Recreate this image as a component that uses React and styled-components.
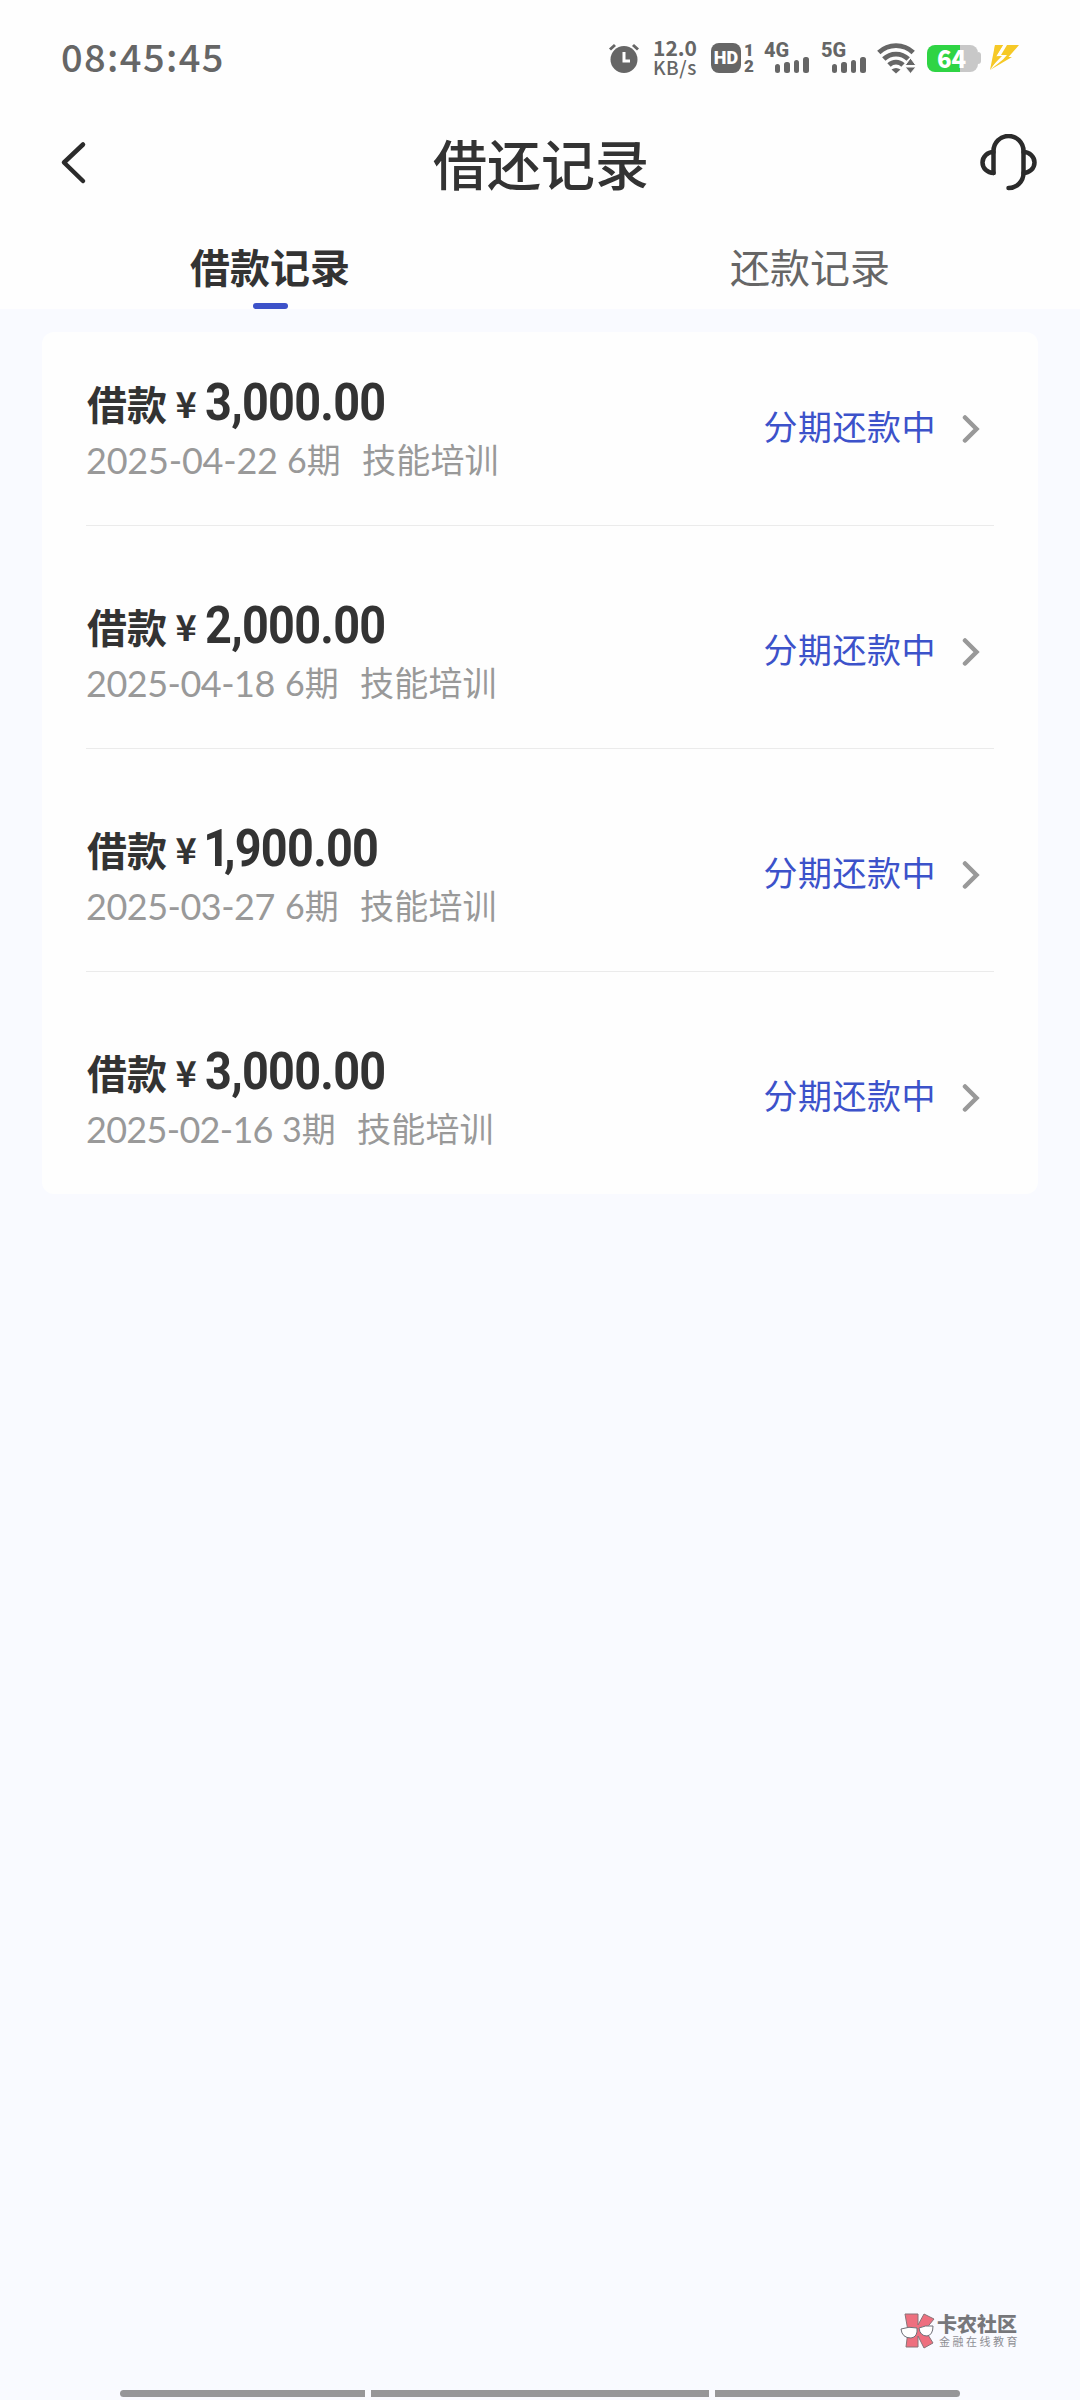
import React from "react";
import styled, { createGlobalStyle } from "styled-components";

const GlobalStyle = createGlobalStyle`
  * { box-sizing: border-box; }
  body { margin: 0; background: #f9faff; }
`;

const cjk = `"Noto Sans CJK SC", sans-serif`;

const Page = styled.div`
  width: 1080px;
  height: 2400px;
  display: flex;
  flex-direction: column;
  background: #f9faff;
  font-family: ${cjk};
  color: #333;
  overflow: hidden;
  white-space: nowrap;
`;

const Top = styled.header`
  height: 309px;
  background: #fefefe;
  display: flex;
  flex-direction: column;
`;

const StatusBar = styled.div`
  height: 116px;
  padding: 0 60px 0 61px;
  display: flex;
  align-items: center;
  justify-content: space-between;
  color: #666;
`;

const Clock = styled.div`
  font-size: 38px;
  font-weight: 500;
  line-height: 40px;
  letter-spacing: 1.4px;
  padding-bottom: 4px;
`;

const StatusIcons = styled.div`
  display: flex;
  align-items: center;
  height: 116px;
`;

const Glyph = styled.svg`
  display: block;
  flex: none;
  margin-left: ${(p) => p.$gap || 0}px;
`;

const Speed = styled.div`
  width: 46px;
  margin-left: 12px;
  display: flex;
  flex-direction: column;
  align-items: center;
  font-weight: 700;
  font-size: 21px;
  line-height: 19px;
  padding-bottom: 2px;
`;

const SpeedUnit = styled.span`
  font-size: 19px;
  font-weight: 500;
  letter-spacing: 0.6px;
`;

const HdBadge = styled.div`
  width: 30px;
  height: 30px;
  margin-left: 13px;
  border-radius: 8px;
  background: #666;
  color: #fff;
  font: 900 18px/30px Roboto, sans-serif;
  text-align: center;
`;

const Sims = styled.div`
  width: 12px;
  margin-left: 2px;
  display: flex;
  flex-direction: column;
  align-items: center;
  font: 900 17px/16px Roboto, sans-serif;
`;

const Network = styled.div`
  width: 45px;
  height: 32px;
  margin-left: ${(p) => p.$gap}px;
  display: flex;
  flex-direction: column;
  font: 800 20px/16px Roboto, sans-serif;
`;

const Bars = styled.div`
  display: flex;
  align-items: flex-end;
  justify-content: flex-end;
  gap: 4px;
  height: 17px;
  margin-top: -2px;
`;

const Bar = styled.i`
  width: 5.6px;
  height: ${(p) => p.$h}px;
  border-radius: 2.5px;
  background: #666;
`;

const Battery = styled.div`
  width: 51px;
  height: 27px;
  margin-left: 11px;
  padding-right: 2px;
  border-radius: 8px;
  background: linear-gradient(90deg, #2fd444 0 64.5%, #c8c8c8 64.5%);
  color: #fff;
  font: 900 24px/26px "Noto Sans CJK SC", sans-serif;
  text-align: center;
`;

const BatteryTip = styled.i`
  width: 3px;
  height: 12px;
  border-radius: 0 3px 3px 0;
  background: #c8c8c8;
`;

const NavBar = styled.div`
  height: 94px;
  padding: 0 43px 0 60px;
  display: grid;
  grid-template-columns: 60px 1fr 60px;
  align-items: center;
`;

const NavSlot = styled.div`
  display: flex;
  justify-content: ${(p) => p.$align};
`;

const Title = styled.h1`
  margin: 0;
  padding-right: 15px;
  font-size: 54px;
  line-height: 60px;
  font-weight: 500;
  text-align: center;
`;

const Tabs = styled.nav`
  height: 99px;
  display: grid;
  grid-template-columns: 1fr 1fr;
`;

const Tab = styled.div`
  display: flex;
  flex-direction: column;
  align-items: center;
  justify-content: space-between;
  padding-top: 31px;
  font-size: 40px;
  line-height: 50px;
  font-weight: ${(p) => (p.$active ? 700 : 400)};
  color: ${(p) => (p.$active ? "#333" : "#666")};
`;

const Underline = styled.i`
  width: 35px;
  height: 6px;
  border-radius: 3px;
  background: #3d52c9;
`;

const Card = styled.main`
  width: 996px;
  height: 862px;
  margin: 23px 42px 0;
  padding: 0 44px;
  border-radius: 12px;
  background: #fefefe;
`;

const Row = styled.section`
  height: ${(p) => (p.$first ? 194 : 223)}px;
  padding-bottom: ${(p) => (p.$last ? 0 : 39)}px;
  padding-top: ${(p) => (p.$first ? 42 : 71)}px;
  border-bottom: ${(p) => (p.$last ? "0" : "1px solid #ebebeb")};
  display: flex;
  justify-content: space-between;
`;

const Info = styled.div`
  display: flex;
  flex-direction: column;
`;

const AmountLine = styled.div`
  height: 61px;
  display: flex;
  align-items: baseline;
  font-weight: 700;
`;

const Label = styled.span`
  font-size: 40px;
  line-height: 58px;
  margin-left: 1px;
`;

const Yen = styled.span`
  width: 38px;
  text-align: center;
  font: 700 36px/50px "Noto Sans CJK SC", sans-serif;
  position: relative;
  top: -2px;
`;

const Amount = styled.span`
  font: 700 52px/50px Roboto, sans-serif;
  transform: scaleX(0.9);
  transform-origin: left;
  letter-spacing: -0.8px;
`;

const Slim = styled.span`
  margin-left: -2px;
  margin-right: -6px;
`;

const Detail = styled.div`
  display: flex;
  height: 50px;
  font: 400 34px/50px Lato, ${cjk};
  color: #999;
`;

const DateText = styled.span`
  width: ${(p) => p.$w}px;
  font-size: 36px;
  letter-spacing: ${(p) => p.$tracking}px;
`;

const Term = styled.span`
  width: 75px;
`;

const Kind = styled.span`
  letter-spacing: 0.2px;
`;

const Status = styled.div`
  height: 50px;
  margin-top: 27px;
  padding-right: 14px;
  display: flex;
  align-items: center;
  gap: 26px;
  font-size: 34px;
  line-height: 50px;
  letter-spacing: 0.5px;
  color: #3c52ca;
`;

const Chevron = styled.svg`
  margin-top: 5px;
`;

const Spacer = styled.div`
  flex: 1;
`;

const Watermark = styled.div`
  align-self: flex-end;
  width: 180px;
  height: 38px;
  margin-bottom: 39px;
  display: flex;
  gap: 2px;
`;

const Brand = styled.div`
  display: flex;
  flex-direction: column;
  color: #77777b;
  font-size: 20px;
  line-height: 22px;
  font-weight: 900;
`;

const Slogan = styled.span`
  margin-left: 2px;
  font-size: 11px;
  line-height: 13px;
  font-weight: 400;
  letter-spacing: 2.5px;
  color: #8e8e94;
`;

const HomeBar = styled.div`
  display: flex;
  justify-content: center;
  gap: 6px;
  height: 10px;
`;

const HomeSegment = styled.i`
  width: ${(p) => p.$w}px;
  height: 7px;
  background: #969698;
  border-radius: ${(p) => p.$r || 0};
`;

const records = [
  { amount: "3,000.00", date: "2025-04-22", term: "6期", w: 201, tracking: -0.2 },
  { amount: "2,000.00", date: "2025-04-18", term: "6期", w: 199, tracking: -0.5 },
  { amount: "1,900.00", date: "2025-03-27", term: "6期", w: 199, tracking: -0.5 },
  { amount: "3,000.00", date: "2025-02-16", term: "3期", w: 196, tracking: -0.7 },
];

function Signal({ label, gap }) {
  return (
    <Network $gap={gap}>
      <span>{label}</span>
      <Bars>
        {[9, 11, 13, 16].map((h) => (
          <Bar key={h} $h={h} />
        ))}
      </Bars>
    </Network>
  );
}

function Alarm() {
  return (
    <Glyph width="32" height="32" viewBox="0 0 32 32">
      <circle cx="16" cy="17.5" r="13.5" fill="#666" />
      <path d="M2 7.5 7 3M30 7.5 25 3" stroke="#666" strokeWidth="3" />
      <path d="M16 10v9h6" fill="none" stroke="#fff" strokeWidth="3" />
    </Glyph>
  );
}

function Wifi() {
  return (
    <Glyph $gap={11} width="39" height="32" viewBox="0 0 39 32">
      <g fill="none" stroke="#666" strokeWidth="4.8">
        <path d="M1.8 10.5a25 25 0 0 1 34.4 0" />
        <path d="M6.8 17a17.5 17.5 0 0 1 24.4 0" />
        <path d="M12 23a10 10 0 0 1 14 0" />
      </g>
      <path d="M14.5 27.500q4.500-3 9 0L19 31.500z" fill="#666" />
      <path d="M28 23.500 33.500 16l5.500 7.500zM28 25h11l-5.500 6.500z" fill="#666" stroke="#fefefe" strokeWidth="1" />
    </Glyph>
  );
}

function Bolt() {
  return (
    <Glyph $gap={8} width="31" height="28" viewBox="0 0 31 28">
      <path d="M6 1h8L7 12.500l6-.5-9 9z" fill="#f6c927" />
      <path d="M18 1h12L19.500 13h3.500L1 26l13-10.500 4-4.500h-6z" fill="#f6c927" />
      <path d="M6 1 1 26l5-7 6-7-5 .5L14 1z" fill="#f6c927" />
    </Glyph>
  );
}

function Logo() {
  return (
    <svg width="35" height="36" viewBox="0 0 35 36">
      <path
        d="M5 1h13v11L24 1l10 5-9 11 8 13-9 5-6-12v11H6l2-16z"
        fill="#ee6f7f"
        stroke="#8a7378"
        strokeWidth="1"
      />
      <path d="M1 16q8-3 16-1 1 9-6 10-9 0-10-9zM19 15q6-3 14-2 0 9-6 10-7 0-8-8z" fill="#fff" stroke="#707078" strokeWidth="1" />
    </svg>
  );
}

function AmountText({ value }) {
  if (value[0] === "1") {
    return (
      <Amount>
        <Slim>1</Slim>
        {value.slice(1)}
      </Amount>
    );
  }
  return <Amount>{value}</Amount>;
}

export default function App() {
  return (
    <Page>
      <GlobalStyle />
      <Top>
        <StatusBar>
          <Clock>08:45:45</Clock>
          <StatusIcons>
            <Alarm />
            <Speed>
              <span>12.0</span>
              <SpeedUnit>KB/s</SpeedUnit>
            </Speed>
            <HdBadge>HD</HdBadge>
            <Sims>
              <span>1</span>
              <span>2</span>
            </Sims>
            <Signal label="4G" gap={9} />
            <Signal label="5G" gap={12} />
            <Wifi />
            <Battery>64</Battery>
            <BatteryTip />
            <Bolt />
          </StatusIcons>
        </StatusBar>
        <NavBar>
          <NavSlot $align="flex-start">
            <svg width="28" height="44" viewBox="0 0 28 44">
              <path d="M23 3.500 4 21.500l19 18.500" fill="none" stroke="#2b2b2b" strokeWidth="4.500" strokeLinecap="round" strokeLinejoin="round" />
            </svg>
          </NavSlot>
          <Title>借还记录</Title>
          <NavSlot $align="flex-end">
            <svg width="58" height="58" viewBox="0 0 58 58">
              <g fill="none" stroke="#2b2b2b" strokeWidth="4.500" strokeLinecap="round" strokeLinejoin="round">
                <path d="M14.500 39V17a15 15 0 0 1 30 0v22a15 15 0 0 1-15 15" />
                <path d="M14.500 18a11 10.500 0 0 0 0 21M44.500 18a11 10.500 0 0 1 0 21" />
              </g>
            </svg>
          </NavSlot>
        </NavBar>
        <Tabs>
          <Tab $active>
            借款记录
            <Underline />
          </Tab>
          <Tab>还款记录</Tab>
        </Tabs>
      </Top>
      <Card>
        {records.map((r, i) => (
          <Row key={r.date} $first={i === 0} $last={i === records.length - 1}>
            <Info>
              <AmountLine>
                <Label>借款</Label>
                <Yen>¥</Yen>
                <AmountText value={r.amount} />
              </AmountLine>
              <Detail>
                <DateText $w={r.w} $tracking={r.tracking}>{r.date}</DateText>
                <Term>{r.term}</Term>
                <Kind>技能培训</Kind>
              </Detail>
            </Info>
            <Status>
              分期还款中
              <Chevron width="18" height="32" viewBox="0 0 18 32">
                <path d="M3 4.500l11.500 11.500L3 27.500" fill="none" stroke="#999" strokeWidth="4.500" strokeLinecap="round" />
              </Chevron>
            </Status>
          </Row>
        ))}
      </Card>
      <Spacer />
      <Watermark>
        <Logo />
        <Brand>
          卡农社区
          <Slogan>金融在线教育</Slogan>
        </Brand>
      </Watermark>
      <HomeBar>
        <HomeSegment $w={245} $r="4px 0 0 4px" />
        <HomeSegment $w={338} />
        <HomeSegment $w={245} $r="0 4px 4px 0" />
      </HomeBar>
    </Page>
  );
}
